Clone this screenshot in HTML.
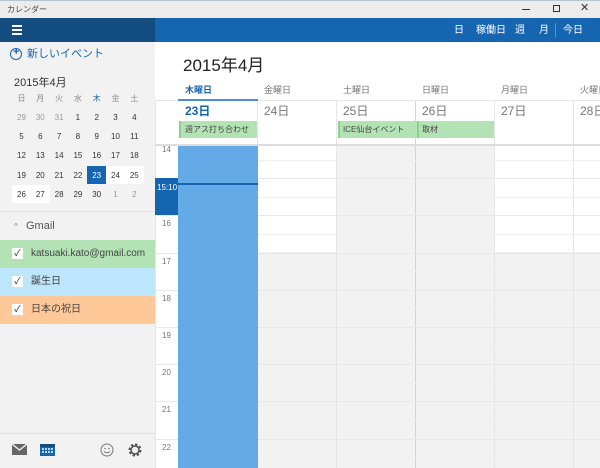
<!DOCTYPE html>
<html><head><meta charset="utf-8"><style>
*{margin:0;padding:0;box-sizing:border-box}
body{width:600px;height:468px;overflow:hidden;position:relative;background:#fff;font-family:"Liberation Sans","Noto Sans CJK JP",sans-serif;color:#333;line-height:1.2;white-space:nowrap}
.a{position:absolute}
.t{font-size:10px;color:#444;line-height:12px}
.cb{position:absolute;width:11px;height:11px;background:#fff;font-size:9px;line-height:11px;text-align:center;color:#222}
</style></head><body>
<div class="a" style="left:0;top:0;width:600px;height:18px;background:#ececec;border-top:1px solid #b8c4d4"></div>
<div class="a t" style="left:7px;top:4px;font-size:8px">カレンダー</div>
<div class="a" style="left:522px;top:9px;width:8px;height:1px;background:#333"></div>
<div class="a" style="left:553px;top:5px;width:7px;height:7px;border:1px solid #333"></div>
<div class="a" style="left:580px;top:2px;font-size:11px;color:#333">✕</div>
<div class="a" style="left:0;top:18px;width:155px;height:24px;background:#134d80"></div>
<div class="a" style="left:155px;top:18px;width:445px;height:24px;background:#1665b0"></div>
<div class="a" style="left:12px;top:25px;width:10px;height:2px;background:#fff;box-shadow:0 4px 0 #fff,0 8px 0 #fff"></div>
<div class="a" style="left:454px;top:25px;color:#fff;font-size:10px">日</div>
<div class="a" style="left:476px;top:25px;color:#fff;font-size:10px">稼働日</div>
<div class="a" style="left:515px;top:25px;color:#fff;font-size:10px">週</div>
<div class="a" style="left:539px;top:25px;color:#fff;font-size:10px">月</div>
<div class="a" style="left:555px;top:23px;width:1px;height:14px;background:#5b93cc"></div>
<div class="a" style="left:563px;top:25px;color:#fff;font-size:10px">今日</div>

<div class="a" style="left:0;top:42px;width:155px;height:426px;background:#f2f2f2"></div>
<div class="a" style="left:10px;top:48px;width:12px;height:12px;border:1.3px solid #1665b0;border-radius:50%"></div>
<div class="a" style="left:13px;top:46px;color:#1665b0;font-size:11px;font-weight:bold">+</div>
<div class="a" style="left:27px;top:48px;color:#1665b0;font-size:11px">新しいイベント</div>
<div class="a" style="left:14px;top:77px;font-size:11px;color:#333">2015年4月</div>
<div class="a" style="left:87px;top:166px;width:19px;height:18px;background:#1665b0"></div>
<div class="a" style="left:106px;top:166px;width:38px;height:18px;background:#fff"></div>
<div class="a" style="left:12px;top:185px;width:38px;height:18px;background:#fff"></div>
<div id="mc"></div>
<div class="a" style="left:0;top:211px;width:155px;height:1px;background:#e2e2e2"></div>
<div class="a" style="left:14px;top:222px;font-size:8px;color:#777">^</div>
<div class="a" style="left:26px;top:220px;font-size:11px;color:#555">Gmail</div>
<div class="a" style="left:0;top:240px;width:155px;height:28px;background:#b3e3b5"></div>
<div class="a" style="left:0;top:268px;width:155px;height:28px;background:#bde5fb"></div>
<div class="a" style="left:0;top:296px;width:155px;height:28px;background:#ffc899"></div>
<div class="cb" style="left:12px;top:248px">✓</div>
<div class="cb" style="left:12px;top:276px">✓</div>
<div class="cb" style="left:12px;top:304px">✓</div>
<div class="a t" style="left:31px;top:248px">katsuaki.kato@gmail.com</div>
<div class="a t" style="left:31px;top:276px">誕生日</div>
<div class="a t" style="left:31px;top:304px">日本の祝日</div>
<div class="a" style="left:0;top:433px;width:155px;height:1px;background:#e2e2e2"></div>
<svg class="a" style="left:12px;top:444px" width="15" height="11"><rect width="15" height="11" fill="#666"/><path d="M0 0L7.5 6L15 0" stroke="#f2f2f2" fill="none" stroke-width="1.3"/></svg>
<svg class="a" style="left:40px;top:444px" width="15" height="12"><rect width="15" height="12" fill="#1665b0"/><rect y="0" width="15" height="3" fill="#134d80"/><g fill="#bcd7f3"><rect x="2" y="4" width="2" height="2"/><rect x="5" y="4" width="2" height="2"/><rect x="8" y="4" width="2" height="2"/><rect x="11" y="4" width="2" height="2"/><rect x="2" y="7" width="2" height="2"/><rect x="5" y="7" width="2" height="2"/><rect x="8" y="7" width="2" height="2"/><rect x="11" y="7" width="2" height="2"/></g></svg>
<svg class="a" style="left:100px;top:443px" width="14" height="14"><circle cx="7" cy="7" r="6" fill="none" stroke="#777"/><circle cx="5" cy="5.5" r=".8" fill="#777"/><circle cx="9" cy="5.5" r=".8" fill="#777"/><path d="M4 8.5Q7 11 10 8.5" stroke="#777" fill="none"/></svg>
<svg class="a" style="left:128px;top:443px" width="14" height="14"><circle cx="7" cy="7" r="5" fill="none" stroke="#555" stroke-width="3" stroke-dasharray="2.2 1.7"/><circle cx="7" cy="7" r="4" fill="none" stroke="#555" stroke-width="1.5"/></svg>

<div class="a" style="left:183px;top:56px;font-size:17px;color:#222">2015年4月</div>
<div class="a" style="left:178px;top:252px;width:422px;height:216px;background:#f2f2f2"></div>
<div class="a" style="left:337px;top:145px;width:158px;height:323px;background:#f2f2f2"></div>
<div id="grid"></div>
<div class="a" style="left:155px;top:178px;width:23px;height:37px;background:#1665b0"></div>
<div class="a" style="left:157px;top:183px;font-size:8px;color:#fff">15:10</div>
<div class="a" style="left:178px;top:145px;width:80px;height:323px;background:#64aae6"></div>
<div class="a" style="left:178px;top:183px;width:80px;height:2px;background:#1665b0"></div>
<div class="a" style="left:178px;top:99px;width:80px;height:2px;background:#4a8fd6"></div>
<div class="a" style="left:155px;top:144px;width:445px;height:2px;background:#ddd"></div>
<div class="a" style="left:185px;top:85px;font-size:9px;color:#1665b0;font-weight:bold">木曜日</div>
<div class="a" style="left:185px;top:104px;font-size:12px;color:#1665b0;font-weight:bold">23日</div>
<div class="a" style="left:179px;top:121px;width:78px;height:17px;background:#b3e3b5;border-left:2px solid #8dcf91"></div>
<div class="a" style="left:185px;top:125px;font-size:8px;color:#444">週アス打ち合わせ</div>
<div class="a" style="left:338px;top:121px;width:156px;height:17px;background:#b3e3b5;border-left:2px solid #8dcf91"></div>
<div class="a" style="left:343px;top:125px;font-size:8px;color:#444">ICE仙台イベント</div>
<div class="a" style="left:417px;top:121px;width:77px;height:17px;background:#b3e3b5;border-left:2px solid #8dcf91"></div>
<div class="a" style="left:422px;top:125px;font-size:8px;color:#444">取材</div>
<script>
var mc=document.getElementById('mc'),h='';
var wd=['日','月','火','水','木','金','土'];
var days=[29,30,31,1,2,3,4,5,6,7,8,9,10,11,12,13,14,15,16,17,18,19,20,21,22,23,24,25,26,27,28,29,30,1,2];
for(var i=0;i<7;i++){var x=12+i*18.8;h+='<div class="a" style="left:'+x+'px;top:94px;width:19px;text-align:center;font-size:8px;color:'+(i==4?'#1665b0':'#888')+'">'+wd[i]+'</div>';}
for(var j=0;j<35;j++){var r=Math.floor(j/7),c=j%7,x=12+c*18.8,y=113+r*19.2;var g=(j<3||j>32);var col=j==25?'#fff':(g?'#999':'#333');
h+='<div class="a" style="left:'+x+'px;top:'+y+'px;width:19px;text-align:center;font-size:8px;color:'+col+'">'+days[j]+'</div>';}
mc.innerHTML=h;
var g='',xs=[178,258,337,416,495,574],names=['木曜日','金曜日','土曜日','日曜日','月曜日','火曜日'];
for(var k=1;k<6;k++){g+='<div class="a" style="left:'+(xs[k]-1)+'px;top:100px;width:1px;height:368px;background:'+(k==3?'#d4d4d4':'#e6e6e6')+'"></div>';
g+='<div class="a" style="left:'+(xs[k]+6)+'px;top:85px;font-size:9px;color:#777">'+names[k]+'</div>';
g+='<div class="a" style="left:'+(xs[k]+6)+'px;top:104px;font-size:12px;color:#777">'+(23+k)+'日</div>';}
g+='<div class="a" style="left:155px;top:100px;width:445px;height:1px;background:#e6e6e6"></div>';
g+='<div class="a" style="left:155px;top:100px;width:1px;height:368px;background:#e6e6e6"></div>';
for(var hr=0;hr<9;hr++){var y=141+hr*37.2;
if(hr>0)g+='<div class="a" style="left:155px;top:'+y+'px;width:445px;height:1px;background:#e8e8e8"></div>';
g+='<div class="a" style="left:178px;top:'+(y+18.6)+'px;width:422px;height:1px;background:#f0f0f0"></div>';
if(hr!=1)g+='<div class="a" style="left:162px;top:'+(y+4)+'px;font-size:8px;color:#777">'+(14+hr)+'</div>';}
document.getElementById('grid').innerHTML=g;
</script>
</body></html>
